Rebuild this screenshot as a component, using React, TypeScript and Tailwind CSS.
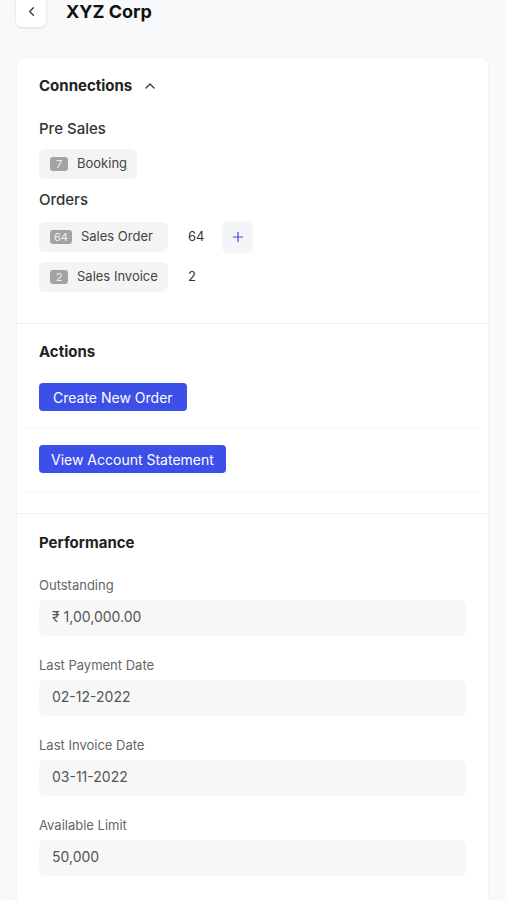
import { ChevronLeft, ChevronUp, Plus } from "lucide-react";

const font = { fontFamily: "Inter, 'Noto Sans', sans-serif" };

interface Link {
  count: number;
  label: string;
  showCount?: boolean;
  canAdd?: boolean;
}

const preSales: Link[] = [{ count: 7, label: "Booking" }];
const orders: Link[] = [
  { count: 64, label: "Sales Order", showCount: true, canAdd: true },
  { count: 2, label: "Sales Invoice", showCount: true },
];

const fields = [
  { label: "Outstanding", value: "₹ 1,00,000.00" },
  { label: "Last Payment Date", value: "02-12-2022" },
  { label: "Last Invoice Date", value: "03-11-2022" },
  { label: "Available Limit", value: "50,000" },
];

function LinkRow({ item }: { item: Link }) {
  return (
    <div className="flex items-center">
      <div
        className={`flex h-[30px] items-center gap-[9px] whitespace-nowrap rounded-md bg-[#f4f4f5] pl-[11px] pr-[10px] ${
          item.showCount ? "w-[129px]" : ""
        }`}
      >
        <span className="flex h-[14px] min-w-[18px] items-center justify-center rounded-[3px] bg-[#a3a3a3] px-[4px] text-[11px] leading-none text-[#eee]">
          {item.count}
        </span>
        <span className="text-[13px] text-[#444]">{item.label}</span>
      </div>
      {item.showCount && (
        <span className="ml-[20px] w-[34px] text-[13px] text-[#333]">{item.count}</span>
      )}
      {item.canAdd && (
        <button className="flex h-[32px] w-[31px] items-center justify-center rounded-md bg-[#f4f5f7]">
          <Plus size={16} strokeWidth={1.8} color="#4f46e5" />
        </button>
      )}
    </div>
  );
}

export default function App() {
  return (
    <div className="min-h-screen w-full bg-[#f8f9fb] border-r-2 border-[#fcfcfd]" style={font}>
      {/* Header */}
      <div className="flex h-[27px] items-start pl-[16px]">
        <button className="-mt-[9px] flex h-[36px] w-[30px] items-end justify-center rounded-md bg-white pb-[8px] text-[#333] shadow-[0_1px_3px_rgba(0,0,0,0.12)]">
          <ChevronLeft size={15} strokeWidth={2} />
        </button>
        <h1 className="ml-[20px] -mt-[1px] text-[18px] font-bold leading-[26px] text-[#111]">XYZ Corp</h1>
      </div>

      {/* Card */}
      <div className="ml-[17px] mt-[31px] w-[471px] rounded-t-lg bg-white pb-10 shadow-[0_0_3px_rgba(0,0,0,0.06)]">
        {/* Connections */}
        <div className="px-[22px] pb-[31px] pt-[18px]">
          <div className="flex items-center gap-[10px]">
            <h2 className="text-[15px] font-bold leading-[20px] text-[#222]">Connections</h2>
            <ChevronUp size={16} strokeWidth={1.8} className="text-[#333]" />
          </div>
          <div className="mt-[23px] text-[15px] font-medium leading-[20px] text-[#333]">Pre Sales</div>
          <div className="mt-[10px] flex flex-col gap-[9px]">
            {preSales.map((item) => (
              <LinkRow key={item.label} item={item} />
            ))}
          </div>
          <div className="mt-[11px] text-[15px] font-medium leading-[20px] text-[#333]">Orders</div>
          <div className="mt-[11px] flex flex-col gap-[9px]">
            {orders.map((item) => (
              <LinkRow key={item.label} item={item} />
            ))}
          </div>
        </div>

        {/* Actions */}
        <div className="border-t border-[#f0f1f3] pt-[18px]">
          <h2 className="px-[22px] text-[15px] font-bold leading-[20px] text-[#222]">Actions</h2>
          <div className="mt-[21px] px-[8px]">
            <div className="border-b border-[#f8f8f9] px-[14px] pb-[17px]">
              <button className="h-[28px] rounded-[4px] bg-[#3c4fe9] px-[14px] text-[14px] text-white">
                Create New Order
              </button>
            </div>
            <div className="border-b border-[#f8f8f9] px-[14px] pb-[19px] pt-[16px]">
              <button className="h-[28px] rounded-[4px] bg-[#3c4fe9] px-[12px] text-[14px] text-white">
                View Account Statement
              </button>
            </div>
          </div>
        </div>

        {/* Performance */}
        <div className="mt-[20px] border-t border-[#f0f1f3] px-[22px] pt-[19px]">
          <h2 className="text-[15px] font-bold leading-[20px] text-[#222]">Performance</h2>
          <div className="mt-[23px] flex flex-col gap-[20px]">
            {fields.map((f) => (
              <div key={f.label}>
                <div className="text-[13px] leading-[18px] text-[#666]">{f.label}</div>
                <div className="mt-[6px] flex h-[36px] items-center rounded-md bg-[#f7f7f8] px-[13px] pb-[3px] text-[14px] text-[#555]">
                  {f.value}
                </div>
              </div>
            ))}
          </div>
        </div>
      </div>
    </div>
  );
}
